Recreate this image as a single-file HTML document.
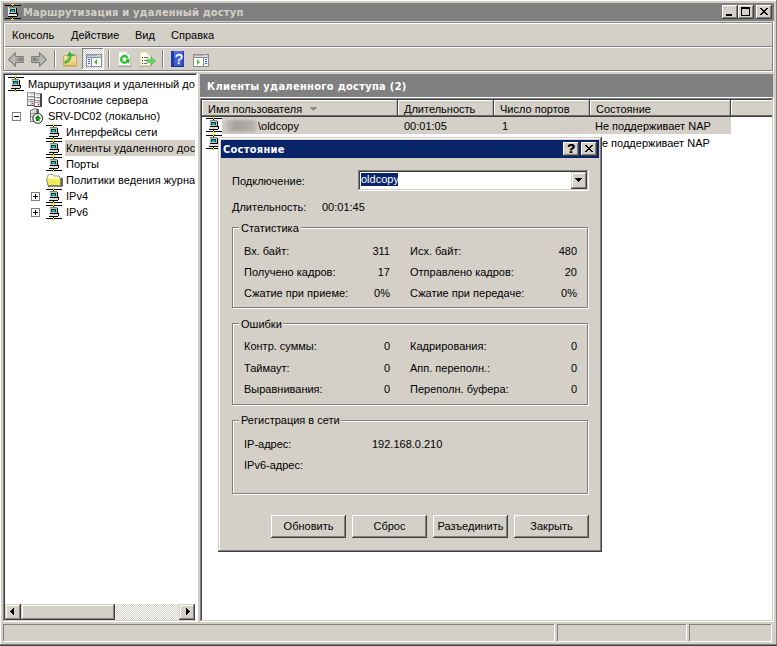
<!DOCTYPE html>
<html lang="ru"><head><meta charset="utf-8"><title>Маршрутизация и удаленный доступ</title>
<style>
html,body{margin:0;padding:0}
body{width:777px;height:646px;overflow:hidden;position:relative;background:#d4d0c8;font-family:"Liberation Sans","DejaVu Sans",sans-serif;font-size:11px;color:#000}
div,span,svg{position:absolute}
span{white-space:nowrap;line-height:13px;height:13px}
.t{font-family:"Liberation Sans","DejaVu Sans",sans-serif;font-size:11px}
.b{font-family:"DejaVu Sans Condensed","DejaVu Sans","Liberation Sans",sans-serif;font-size:11px;font-weight:bold}
.d{font-family:"Liberation Sans","DejaVu Sans",sans-serif;font-size:11px}
.dith{background:repeating-conic-gradient(#fff 0% 25%,#d4d0c8 0% 50%) 0 0/2px 2px}
svg{overflow:visible}
</style></head><body>

<div style="left:0px;top:0px;width:777px;height:1px;background:#ffffff;"></div>
<div style="left:0px;top:0px;width:1px;height:646px;background:#ffffff;"></div>
<div style="left:0px;top:645px;width:777px;height:1px;background:#404040;"></div>
<div style="left:776px;top:0px;width:1px;height:645px;background:#808080;"></div>
<div style="left:0px;top:644px;width:777px;height:1px;background:#808080;"></div>
<div style="left:3px;top:3px;width:771px;height:18px;background:#808080;"></div>
<svg class="i" style="left:5px;top:4px" width="16" height="16" viewBox="0 0 16 16" shape-rendering="crispEdges"><rect x="0" y="1" width="16" height="1" fill="#000"/><rect x="6" y="0" width="3" height="1" fill="#e8e800"/><rect x="7" y="1" width="1" height="1" fill="#ffff00"/><rect x="7" y="2" width="1" height="1" fill="#000"/><rect x="3" y="3" width="8" height="7" fill="#c0c0c0"/><rect x="3" y="3" width="8" height="1" fill="#808080"/><rect x="3" y="3" width="1" height="7" fill="#e8e8e8"/><rect x="11" y="4" width="1" height="6" fill="#000"/><rect x="4" y="9" width="8" height="1" fill="#000"/><rect x="5" y="5" width="5" height="3" fill="#004040"/><rect x="6" y="6" width="3" height="2" fill="#00c0a0"/><rect x="3" y="10" width="9" height="2" fill="#e0e0e0"/><rect x="12" y="9" width="1" height="3" fill="#000"/><rect x="3" y="12" width="9" height="1" fill="#000"/><rect x="0" y="14" width="16" height="1" fill="#000"/><rect x="7" y="13" width="1" height="1" fill="#000"/><rect x="6" y="15" width="3" height="1" fill="#e8e800"/><rect x="7" y="14" width="1" height="1" fill="#ffff00"/></svg>
<span class="b" style="left:23px;top:6px;color:#d4d0c8;letter-spacing:0.17px;">Маршрутизация и удаленный доступ</span>
<div style="left:722px;top:5px;width:16px;height:14px;background:#d4d0c8;"></div>
<div style="left:722px;top:5px;width:15px;height:1px;background:#ffffff;"></div>
<div style="left:722px;top:5px;width:1px;height:13px;background:#ffffff;"></div>
<div style="left:722px;top:18px;width:16px;height:1px;background:#404040;"></div>
<div style="left:737px;top:5px;width:1px;height:14px;background:#404040;"></div>
<div style="left:723px;top:17px;width:14px;height:1px;background:#808080;"></div>
<div style="left:736px;top:6px;width:1px;height:12px;background:#808080;"></div>
<div style="left:726px;top:14px;width:6px;height:2px;background:#000;"></div>
<div style="left:738px;top:5px;width:16px;height:14px;background:#d4d0c8;"></div>
<div style="left:738px;top:5px;width:15px;height:1px;background:#ffffff;"></div>
<div style="left:738px;top:5px;width:1px;height:13px;background:#ffffff;"></div>
<div style="left:738px;top:18px;width:16px;height:1px;background:#404040;"></div>
<div style="left:753px;top:5px;width:1px;height:14px;background:#404040;"></div>
<div style="left:739px;top:17px;width:14px;height:1px;background:#808080;"></div>
<div style="left:752px;top:6px;width:1px;height:12px;background:#808080;"></div>
<div style="left:741px;top:7px;width:9px;height:9px;border:1px solid #000;border-top:2px solid #000;box-sizing:border-box;"></div>
<div style="left:756px;top:5px;width:16px;height:14px;background:#d4d0c8;"></div>
<div style="left:756px;top:5px;width:15px;height:1px;background:#ffffff;"></div>
<div style="left:756px;top:5px;width:1px;height:13px;background:#ffffff;"></div>
<div style="left:756px;top:18px;width:16px;height:1px;background:#404040;"></div>
<div style="left:771px;top:5px;width:1px;height:14px;background:#404040;"></div>
<div style="left:757px;top:17px;width:14px;height:1px;background:#808080;"></div>
<div style="left:770px;top:6px;width:1px;height:12px;background:#808080;"></div>
<svg style="left:760px;top:8px" width="8" height="7" viewBox="0 0 8 7" shape-rendering="crispEdges"><path d="M0 0h2v1h-2zM6 0h2v1h-2zM1 1h2v1h-2zM5 1h2v1h-2zM2 2h4v1h-4zM3 3h2v1h-2zM2 4h4v1h-4zM1 5h2v1h-2zM5 5h2v1h-2zM0 6h2v1h-2zM6 6h2v1h-2z" fill="#000"/></svg>
<div style="left:3px;top:22px;width:771px;height:1px;background:#8c8c8c;"></div>
<div style="left:3px;top:22px;width:1px;height:49px;background:#8c8c8c;"></div>
<div style="left:4px;top:23px;width:769px;height:1px;background:#ffffff;"></div>
<div style="left:4px;top:23px;width:1px;height:47px;background:#ffffff;"></div>
<div style="left:772px;top:23px;width:1px;height:48px;background:#808080;"></div>
<div style="left:773px;top:22px;width:1px;height:50px;background:#ffffff;"></div>
<div style="left:5px;top:46px;width:767px;height:1px;background:#808080;"></div>
<span class="t" style="left:12px;top:29px;">Консоль</span>
<span class="t" style="left:71px;top:29px;">Действие</span>
<span class="t" style="left:135px;top:29px;">Вид</span>
<span class="t" style="left:171px;top:29px;">Справка</span>
<div style="left:5px;top:47px;width:767px;height:1px;background:#ffffff;"></div>
<div style="left:4px;top:70px;width:769px;height:1px;background:#808080;"></div>
<div style="left:3px;top:71px;width:771px;height:1px;background:#ffffff;"></div>
<svg style="left:8px;top:52px" width="16" height="15" viewBox="0 0 16 15"><defs><linearGradient id="gab" x1="0" x2="1" y1="0" y2="0"><stop offset="0" stop-color="#b4b4b4"/><stop offset="1" stop-color="#6e6e6e"/></linearGradient></defs><g><path d="M7.5 0.7 L0.7 7.5 L7.5 14.3 L7.5 10.5 L15.3 10.5 L15.3 4.5 L7.5 4.5 Z" fill="#c2c0bc" stroke="#7c7c7c" stroke-width="1.1" stroke-linejoin="round"/><path d="M6.5 5.6 H14.2 V9.4 H6.5 Z" fill="url(#gab)"/><path d="M2.6 7.5 L6.5 3.6 V11.4 Z" fill="#b8b6b2"/></g></svg>
<svg style="left:31px;top:52px" width="16" height="15" viewBox="0 0 16 15"><defs><linearGradient id="gaf" x1="0" x2="1" y1="0" y2="0"><stop offset="0" stop-color="#b4b4b4"/><stop offset="1" stop-color="#6e6e6e"/></linearGradient></defs><g transform="translate(16,0) scale(-1,1)"><path d="M7.5 0.7 L0.7 7.5 L7.5 14.3 L7.5 10.5 L15.3 10.5 L15.3 4.5 L7.5 4.5 Z" fill="#c2c0bc" stroke="#7c7c7c" stroke-width="1.1" stroke-linejoin="round"/><path d="M6.5 5.6 H14.2 V9.4 H6.5 Z" fill="url(#gaf)"/><path d="M2.6 7.5 L6.5 3.6 V11.4 Z" fill="#b8b6b2"/></g></svg>
<div style="left:54px;top:50px;width:1px;height:18px;background:#808080;"></div>
<div style="left:55px;top:50px;width:1px;height:18px;background:#ffffff;"></div>
<div style="left:108px;top:50px;width:1px;height:18px;background:#808080;"></div>
<div style="left:109px;top:50px;width:1px;height:18px;background:#ffffff;"></div>
<div style="left:162px;top:50px;width:1px;height:18px;background:#808080;"></div>
<div style="left:163px;top:50px;width:1px;height:18px;background:#ffffff;"></div>
<svg style="left:63px;top:51px" width="16" height="16" viewBox="0 0 16 16"><defs><linearGradient id="gf" x1="0" x2="0" y1="0" y2="1"><stop offset="0" stop-color="#f8e4a4"/><stop offset="1" stop-color="#eec870"/></linearGradient></defs><path d="M0.5 4.5 H5.5 L6.5 3.6 H13.5 V15 H0.5 Z" fill="url(#gf)" stroke="#d4aa58" stroke-width="1"/><rect x="0.5" y="14.3" width="13" height="1" fill="#c89c48"/><rect x="9" y="3.8" width="3" height="1.4" fill="#5890e0"/><path d="M2.6 11.2 Q6.6 9.6 7.4 4.8" fill="none" stroke="#34b434" stroke-width="2.6" stroke-linecap="round"/><path d="M3.6 5.2 L6.6 0.6 L10.4 5 L8.6 4.6 L7.2 5.6 Z" fill="#34b434"/><path d="M3 10.6 Q6 9.2 6.8 5" fill="none" stroke="#7ee07e" stroke-width="0.8"/></svg>
<div class="dith" style="left:82px;top:48px;width:22px;height:22px;"></div>
<div style="left:82px;top:48px;width:22px;height:1px;background:#808080;"></div>
<div style="left:82px;top:48px;width:1px;height:22px;background:#808080;"></div>
<div style="left:82px;top:69px;width:22px;height:1px;background:#ffffff;"></div>
<div style="left:103px;top:48px;width:1px;height:22px;background:#ffffff;"></div>
<svg style="left:86px;top:54px" width="16" height="13" viewBox="0 0 16 13" shape-rendering="crispEdges"><rect x="0" y="0" width="16" height="13" fill="#fff"/><rect x="0" y="0" width="16" height="1" fill="#8890a0"/><rect x="0" y="0" width="1" height="13" fill="#8890a0"/><rect x="15" y="0" width="1" height="13" fill="#8890a0"/><rect x="0" y="12" width="16" height="1" fill="#8890a0"/><rect x="1" y="1" width="14" height="1" fill="#a8b0c8"/><rect x="1" y="2" width="14" height="1" fill="#c8d0e0"/><rect x="11" y="1" width="1" height="1" fill="#fff"/><rect x="13" y="1" width="1" height="1" fill="#fff"/><rect x="0" y="3" width="16" height="1" fill="#8890a0"/><rect x="5" y="3" width="1" height="10" fill="#8890a0"/><rect x="1" y="4" width="4" height="8" fill="#eef0f8"/><rect x="2" y="5" width="2" height="1" fill="#3868d8"/><rect x="2" y="7" width="2" height="1" fill="#3868d8"/><rect x="2" y="9" width="2" height="1" fill="#3868d8"/><path d="M11 5 L11 11 L8 8 Z" fill="#48c030" shape-rendering="auto"/></svg>
<svg style="left:118px;top:51px" width="14" height="16" viewBox="0 0 14 16"><path d="M0.6 0.6 H9.6 L12.6 3.6 V15 H0.6 Z" fill="#fff" stroke="#d0d0d0" stroke-width="0.7"/><path d="M0.4 15.2 H12.9" fill="none" stroke="#8c8c8c" stroke-width="1"/><path d="M12.8 4 V15" fill="none" stroke="#b8b8b8" stroke-width="0.8"/><path d="M9.6 0.6 V3.6 H12.6 Z" fill="#e4e4e4" stroke="#bcbcbc" stroke-width="0.6"/><circle cx="6.5" cy="8.4" r="3.3" fill="none" stroke="#2cc42c" stroke-width="2.5"/><path d="M6.5 8.4 L12 6.6 L12 8.4 Z" fill="#fff"/><path d="M7.4 8.6 L11.9 8.2 L10.6 12.8 Z" fill="#22b422"/></svg>
<svg style="left:139px;top:51px" width="18" height="16" viewBox="0 0 18 16"><path d="M1 1 H9 L12 4 V15 H1 Z" fill="#fffce4" stroke="#d0ccb0" stroke-width="0.8"/><path d="M0.8 15.2 H12.3 M12.2 4.5 V15.2" fill="none" stroke="#a4a090" stroke-width="0.9"/><path d="M9 1 V4 H12 Z" fill="#ecead8" stroke="#c8c4b0" stroke-width="0.6"/><rect x="3" y="6" width="1" height="1" fill="#303030"/><rect x="5" y="6" width="4.5" height="1" fill="#6868a8"/><rect x="3" y="9" width="1" height="1" fill="#303030"/><rect x="5" y="9" width="3" height="1" fill="#6868a8"/><rect x="3" y="12" width="1" height="1" fill="#303030"/><rect x="5" y="12" width="3" height="1" fill="#6868a8"/><path d="M8 8.4 H12 V6 L16.6 10 L12 14 V11.6 H8 Z" fill="#5cd45c" stroke="#3cb43c" stroke-width="0.5"/></svg>
<svg style="left:171px;top:51px" width="13" height="16" viewBox="0 0 13 16"><defs><linearGradient id="gh" x1="0" x2="1" y1="0" y2="1"><stop offset="0" stop-color="#5878e4"/><stop offset="1" stop-color="#2c4cc0"/></linearGradient></defs><rect x="0" y="0" width="13" height="16" fill="url(#gh)"/><rect x="0" y="0" width="3" height="16" fill="#1c3cb0"/><rect x="0" y="15" width="13" height="1" fill="#16309a"/><rect x="12" y="0" width="1" height="16" fill="#2440b0"/><text x="7.8" y="13.2" text-anchor="middle" font-family="Liberation Sans,sans-serif" font-size="14" fill="#fff" stroke="#fff" stroke-width="0.3">?</text></svg>
<svg style="left:193px;top:54px" width="16" height="13" viewBox="0 0 16 13" shape-rendering="crispEdges"><rect x="0" y="0" width="16" height="13" fill="#fff"/><rect x="0" y="0" width="16" height="1" fill="#8c8c8c"/><rect x="0" y="0" width="1" height="13" fill="#8c8c8c"/><rect x="15" y="0" width="1" height="13" fill="#8c8c8c"/><rect x="0" y="12" width="16" height="1" fill="#8c8c8c"/><rect x="1" y="1" width="14" height="1" fill="#b4b4b4"/><rect x="1" y="2" width="14" height="1" fill="#d8d8d8"/><rect x="11" y="1" width="1" height="1" fill="#fff"/><rect x="13" y="1" width="1" height="1" fill="#fff"/><rect x="0" y="3" width="16" height="1" fill="#8c8c8c"/><rect x="10" y="3" width="1" height="10" fill="#8c8c8c"/><path d="M4 5 L4 11 L7 8 Z" fill="#50c030" shape-rendering="auto"/><rect x="11" y="4" width="4" height="8" fill="#eef0f8"/><rect x="12" y="5" width="2" height="1" fill="#3868d8"/><rect x="12" y="7" width="2" height="1" fill="#3868d8"/><rect x="12" y="9" width="2" height="1" fill="#3868d8"/></svg>
<div style="left:3px;top:73px;width:195px;height:549px;background:#ffffff;"></div>
<div style="left:3px;top:73px;width:194px;height:1px;background:#808080;"></div>
<div style="left:3px;top:73px;width:1px;height:548px;background:#808080;"></div>
<div style="left:4px;top:74px;width:192px;height:1px;background:#404040;"></div>
<div style="left:4px;top:74px;width:1px;height:546px;background:#404040;"></div>
<div style="left:3px;top:621px;width:195px;height:1px;background:#ffffff;"></div>
<div style="left:197px;top:73px;width:1px;height:549px;background:#ffffff;"></div>
<div style="left:4px;top:620px;width:193px;height:1px;background:#d4d0c8;"></div>
<div style="left:196px;top:74px;width:1px;height:547px;background:#ffffff;"></div>
<div style="left:5px;top:75px;width:190px;height:529px;overflow:hidden">
<div style="left:60px;top:65px;width:140px;height:16px;background:#d4d0c8;"></div>
<svg class="i" style="left:3px;top:1px" width="16" height="16" viewBox="0 0 16 16" shape-rendering="crispEdges"><rect x="0" y="1" width="16" height="1" fill="#000"/><rect x="6" y="0" width="3" height="1" fill="#e8e800"/><rect x="7" y="1" width="1" height="1" fill="#ffff00"/><rect x="7" y="2" width="1" height="1" fill="#000"/><rect x="3" y="3" width="8" height="7" fill="#c0c0c0"/><rect x="3" y="3" width="8" height="1" fill="#808080"/><rect x="3" y="3" width="1" height="7" fill="#e8e8e8"/><rect x="11" y="4" width="1" height="6" fill="#000"/><rect x="4" y="9" width="8" height="1" fill="#000"/><rect x="5" y="5" width="5" height="3" fill="#004040"/><rect x="6" y="6" width="3" height="2" fill="#00c0a0"/><rect x="3" y="10" width="9" height="2" fill="#e0e0e0"/><rect x="12" y="9" width="1" height="3" fill="#000"/><rect x="3" y="12" width="9" height="1" fill="#000"/><rect x="0" y="14" width="16" height="1" fill="#000"/><rect x="7" y="13" width="1" height="1" fill="#000"/><rect x="6" y="15" width="3" height="1" fill="#e8e800"/><rect x="7" y="14" width="1" height="1" fill="#ffff00"/></svg>
<span class="t" style="left:23px;top:3px;">Маршрутизация и удаленный доступ</span>
<svg style="left:22px;top:17px" width="16" height="16" viewBox="0 0 16 16" shape-rendering="crispEdges"><rect x="0" y="0" width="8" height="14" fill="#d4d4d4"/><rect x="1" y="1" width="2" height="12" fill="#f4f4f4"/><rect x="0" y="0" width="8" height="1" fill="#a0a0a0"/><rect x="0" y="0" width="1" height="14" fill="#909090"/><rect x="0" y="13" width="8" height="1" fill="#505050"/><rect x="7" y="0" width="1" height="14" fill="#606060"/><rect x="1" y="3" width="6" height="1" fill="#fff"/><rect x="1" y="4" width="6" height="1" fill="#909090"/><rect x="1" y="6" width="6" height="1" fill="#fff"/><rect x="1" y="7" width="6" height="1" fill="#909090"/><rect x="1" y="9" width="6" height="1" fill="#a8a8a8"/><rect x="5" y="11" width="1" height="1" fill="#e80000"/><rect x="7" y="1" width="7" height="14" fill="#dcdcdc"/><rect x="8" y="2" width="2" height="12" fill="#f8f8f8"/><rect x="7" y="1" width="7" height="1" fill="#a0a0a0"/><rect x="7" y="1" width="1" height="14" fill="#808080"/><rect x="7" y="14" width="8" height="1" fill="#404040"/><rect x="13" y="2" width="2" height="13" fill="#484848"/><rect x="14" y="1" width="1" height="1" fill="#707070"/><rect x="8" y="4" width="5" height="1" fill="#fff"/><rect x="8" y="5" width="5" height="1" fill="#909090"/><rect x="8" y="7" width="5" height="1" fill="#fff"/><rect x="8" y="8" width="5" height="1" fill="#909090"/><rect x="8" y="10" width="5" height="1" fill="#a8a8a8"/><rect x="11" y="12" width="1" height="1" fill="#e80000"/></svg>
<span class="t" style="left:43px;top:19px;">Состояние сервера</span>
<svg style="left:7px;top:37px" width="9" height="9" viewBox="0 0 9 9" shape-rendering="crispEdges"><rect x="0" y="0" width="9" height="9" fill="#fff"/><path d="M0 0h9v1h-9zM0 8h9v1h-9zM0 0h1v9h-1zM8 0h1v9h-1z" fill="#808080"/><rect x="2" y="4" width="5" height="1" fill="#000"/></svg>
<svg style="left:25px;top:33px" width="16" height="16" viewBox="0 0 16 16"><path d="M0.5 2.5 L5.5 0.5 L8.5 1.5 V13.5 H0.5 Z" fill="#d8d8d8" stroke="#707070"/><path d="M6.5 1 L8.5 1.8 V6 H6.5 Z" fill="#505050"/><path d="M1.5 3 V13" stroke="#f8f8f8"/><path d="M1 5.5 H6 M1 8.5 H4" stroke="#909090"/><circle cx="7.8" cy="10.4" r="4.9" fill="#fff" stroke="#202020" stroke-width="1"/><path d="M7.8 6.9 L11.2 10.4 H9.6 V13 H6 V10.4 H4.4 Z" fill="#108c10"/></svg>
<span class="t" style="left:43px;top:35px;">SRV-DC02 (локально)</span>
<svg class="i" style="left:41px;top:49px" width="16" height="16" viewBox="0 0 16 16" shape-rendering="crispEdges"><rect x="0" y="1" width="16" height="1" fill="#000"/><rect x="6" y="0" width="3" height="1" fill="#e8e800"/><rect x="7" y="1" width="1" height="1" fill="#ffff00"/><rect x="7" y="2" width="1" height="1" fill="#000"/><rect x="3" y="3" width="8" height="7" fill="#c0c0c0"/><rect x="3" y="3" width="8" height="1" fill="#808080"/><rect x="3" y="3" width="1" height="7" fill="#e8e8e8"/><rect x="11" y="4" width="1" height="6" fill="#000"/><rect x="4" y="9" width="8" height="1" fill="#000"/><rect x="5" y="5" width="5" height="3" fill="#004040"/><rect x="6" y="6" width="3" height="2" fill="#00c0a0"/><rect x="3" y="10" width="9" height="2" fill="#e0e0e0"/><rect x="12" y="9" width="1" height="3" fill="#000"/><rect x="3" y="12" width="9" height="1" fill="#000"/><rect x="0" y="14" width="16" height="1" fill="#000"/><rect x="7" y="13" width="1" height="1" fill="#000"/><rect x="6" y="15" width="3" height="1" fill="#e8e800"/><rect x="7" y="14" width="1" height="1" fill="#ffff00"/></svg>
<span class="t" style="left:61px;top:51px;">Интерфейсы сети</span>
<svg class="i" style="left:41px;top:65px" width="16" height="16" viewBox="0 0 16 16" shape-rendering="crispEdges"><rect x="0" y="1" width="16" height="1" fill="#000"/><rect x="6" y="0" width="3" height="1" fill="#e8e800"/><rect x="7" y="1" width="1" height="1" fill="#ffff00"/><rect x="7" y="2" width="1" height="1" fill="#000"/><rect x="3" y="3" width="8" height="7" fill="#c0c0c0"/><rect x="3" y="3" width="8" height="1" fill="#808080"/><rect x="3" y="3" width="1" height="7" fill="#e8e8e8"/><rect x="11" y="4" width="1" height="6" fill="#000"/><rect x="4" y="9" width="8" height="1" fill="#000"/><rect x="5" y="5" width="5" height="3" fill="#004040"/><rect x="6" y="6" width="3" height="2" fill="#00c0a0"/><rect x="3" y="10" width="9" height="2" fill="#e0e0e0"/><rect x="12" y="9" width="1" height="3" fill="#000"/><rect x="3" y="12" width="9" height="1" fill="#000"/><rect x="0" y="14" width="16" height="1" fill="#000"/><rect x="7" y="13" width="1" height="1" fill="#000"/><rect x="6" y="15" width="3" height="1" fill="#e8e800"/><rect x="7" y="14" width="1" height="1" fill="#ffff00"/></svg>
<span class="t" style="left:61px;top:67px;letter-spacing:0.12px;">Клиенты удаленного доступа</span>
<svg class="i" style="left:41px;top:81px" width="16" height="16" viewBox="0 0 16 16" shape-rendering="crispEdges"><rect x="0" y="1" width="16" height="1" fill="#000"/><rect x="6" y="0" width="3" height="1" fill="#e8e800"/><rect x="7" y="1" width="1" height="1" fill="#ffff00"/><rect x="7" y="2" width="1" height="1" fill="#000"/><rect x="3" y="3" width="8" height="7" fill="#c0c0c0"/><rect x="3" y="3" width="8" height="1" fill="#808080"/><rect x="3" y="3" width="1" height="7" fill="#e8e8e8"/><rect x="11" y="4" width="1" height="6" fill="#000"/><rect x="4" y="9" width="8" height="1" fill="#000"/><rect x="5" y="5" width="5" height="3" fill="#004040"/><rect x="6" y="6" width="3" height="2" fill="#00c0a0"/><rect x="3" y="10" width="9" height="2" fill="#e0e0e0"/><rect x="12" y="9" width="1" height="3" fill="#000"/><rect x="3" y="12" width="9" height="1" fill="#000"/><rect x="0" y="14" width="16" height="1" fill="#000"/><rect x="7" y="13" width="1" height="1" fill="#000"/><rect x="6" y="15" width="3" height="1" fill="#e8e800"/><rect x="7" y="14" width="1" height="1" fill="#ffff00"/></svg>
<span class="t" style="left:61px;top:83px;">Порты</span>
<svg style="left:41px;top:97px" width="17" height="16" viewBox="0 0 17 16"><path d="M1.5 4.5 Q1.5 2.5 3.5 2.5 H7 L8.5 4 H13.5 V6.5 H1.5 Z" fill="#fbfbe0" stroke="#9c9c84" stroke-width="1"/><path d="M0.8 6.2 Q0.2 6.4 0.6 7.4 L2 13.5 H15.5 V6.2 Z" fill="#f0ec58"/><path d="M0.8 6.2 Q0.2 6.4 0.6 7.4 L2 13.5" fill="none" stroke="#8c8c70" stroke-width="1"/><path d="M2 6.5 H14" stroke="#fcfcc0" stroke-width="1"/><path d="M2 14 H16 V5.5" fill="none" stroke="#101010" stroke-width="1.2"/><path d="M14.5 6 V13" stroke="#808060" stroke-width="1"/></svg>
<span class="t" style="left:61px;top:99px;letter-spacing:0.05px;">Политики ведения журнала</span>
<svg style="left:26px;top:117px" width="9" height="9" viewBox="0 0 9 9" shape-rendering="crispEdges"><rect x="0" y="0" width="9" height="9" fill="#fff"/><path d="M0 0h9v1h-9zM0 8h9v1h-9zM0 0h1v9h-1zM8 0h1v9h-1z" fill="#808080"/><rect x="2" y="4" width="5" height="1" fill="#000"/><rect x="4" y="2" width="1" height="5" fill="#000"/></svg>
<svg class="i" style="left:41px;top:113px" width="16" height="16" viewBox="0 0 16 16" shape-rendering="crispEdges"><rect x="0" y="1" width="16" height="1" fill="#000"/><rect x="6" y="0" width="3" height="1" fill="#e8e800"/><rect x="7" y="1" width="1" height="1" fill="#ffff00"/><rect x="7" y="2" width="1" height="1" fill="#000"/><rect x="3" y="3" width="8" height="7" fill="#c0c0c0"/><rect x="3" y="3" width="8" height="1" fill="#808080"/><rect x="3" y="3" width="1" height="7" fill="#e8e8e8"/><rect x="11" y="4" width="1" height="6" fill="#000"/><rect x="4" y="9" width="8" height="1" fill="#000"/><rect x="5" y="5" width="5" height="3" fill="#004040"/><rect x="6" y="6" width="3" height="2" fill="#00c0a0"/><rect x="3" y="10" width="9" height="2" fill="#e0e0e0"/><rect x="12" y="9" width="1" height="3" fill="#000"/><rect x="3" y="12" width="9" height="1" fill="#000"/><rect x="0" y="14" width="16" height="1" fill="#000"/><rect x="7" y="13" width="1" height="1" fill="#000"/><rect x="6" y="15" width="3" height="1" fill="#e8e800"/><rect x="7" y="14" width="1" height="1" fill="#ffff00"/></svg>
<span class="t" style="left:61px;top:115px;">IPv4</span>
<svg style="left:26px;top:133px" width="9" height="9" viewBox="0 0 9 9" shape-rendering="crispEdges"><rect x="0" y="0" width="9" height="9" fill="#fff"/><path d="M0 0h9v1h-9zM0 8h9v1h-9zM0 0h1v9h-1zM8 0h1v9h-1z" fill="#808080"/><rect x="2" y="4" width="5" height="1" fill="#000"/><rect x="4" y="2" width="1" height="5" fill="#000"/></svg>
<svg class="i" style="left:41px;top:129px" width="16" height="16" viewBox="0 0 16 16" shape-rendering="crispEdges"><rect x="0" y="1" width="16" height="1" fill="#000"/><rect x="6" y="0" width="3" height="1" fill="#e8e800"/><rect x="7" y="1" width="1" height="1" fill="#ffff00"/><rect x="7" y="2" width="1" height="1" fill="#000"/><rect x="3" y="3" width="8" height="7" fill="#c0c0c0"/><rect x="3" y="3" width="8" height="1" fill="#808080"/><rect x="3" y="3" width="1" height="7" fill="#e8e8e8"/><rect x="11" y="4" width="1" height="6" fill="#000"/><rect x="4" y="9" width="8" height="1" fill="#000"/><rect x="5" y="5" width="5" height="3" fill="#004040"/><rect x="6" y="6" width="3" height="2" fill="#00c0a0"/><rect x="3" y="10" width="9" height="2" fill="#e0e0e0"/><rect x="12" y="9" width="1" height="3" fill="#000"/><rect x="3" y="12" width="9" height="1" fill="#000"/><rect x="0" y="14" width="16" height="1" fill="#000"/><rect x="7" y="13" width="1" height="1" fill="#000"/><rect x="6" y="15" width="3" height="1" fill="#e8e800"/><rect x="7" y="14" width="1" height="1" fill="#ffff00"/></svg>
<span class="t" style="left:61px;top:131px;">IPv6</span>
</div>
<div class="dith" style="left:5px;top:604px;width:190px;height:16px;"></div>
<div style="left:5px;top:604px;width:16px;height:16px;background:#d4d0c8;"></div>
<div style="left:6px;top:605px;width:13px;height:1px;background:#ffffff;"></div>
<div style="left:6px;top:605px;width:1px;height:13px;background:#ffffff;"></div>
<div style="left:5px;top:619px;width:16px;height:1px;background:#404040;"></div>
<div style="left:20px;top:604px;width:1px;height:16px;background:#404040;"></div>
<div style="left:6px;top:618px;width:14px;height:1px;background:#808080;"></div>
<div style="left:19px;top:605px;width:1px;height:14px;background:#808080;"></div>
<div style="left:179px;top:604px;width:16px;height:16px;background:#d4d0c8;"></div>
<div style="left:180px;top:605px;width:13px;height:1px;background:#ffffff;"></div>
<div style="left:180px;top:605px;width:1px;height:13px;background:#ffffff;"></div>
<div style="left:179px;top:619px;width:16px;height:1px;background:#404040;"></div>
<div style="left:194px;top:604px;width:1px;height:16px;background:#404040;"></div>
<div style="left:180px;top:618px;width:14px;height:1px;background:#808080;"></div>
<div style="left:193px;top:605px;width:1px;height:14px;background:#808080;"></div>
<div style="left:21px;top:604px;width:94px;height:16px;background:#d4d0c8;"></div>
<div style="left:22px;top:605px;width:91px;height:1px;background:#ffffff;"></div>
<div style="left:22px;top:605px;width:1px;height:13px;background:#ffffff;"></div>
<div style="left:21px;top:619px;width:94px;height:1px;background:#404040;"></div>
<div style="left:114px;top:604px;width:1px;height:16px;background:#404040;"></div>
<div style="left:22px;top:618px;width:92px;height:1px;background:#808080;"></div>
<div style="left:113px;top:605px;width:1px;height:14px;background:#808080;"></div>
<svg style="left:10px;top:608px" width="4" height="7" viewBox="0 0 4 7" shape-rendering="crispEdges"><path d="M3 0h1v7h-1zM2 1h1v5h-1zM1 2h1v3h-1zM0 3h1v1h-1z" fill="#000"/></svg>
<svg style="left:186px;top:608px" width="4" height="7" viewBox="0 0 4 7" shape-rendering="crispEdges"><path d="M0 0h1v7h-1zM1 1h1v5h-1zM2 2h1v3h-1zM3 3h1v1h-1z" fill="#000"/></svg>
<div style="left:200px;top:74px;width:573px;height:23px;background:#808080;"></div>
<div style="left:200px;top:97px;width:573px;height:1px;background:#ffffff;"></div>
<span class="b" style="left:207px;top:80px;color:#fff;letter-spacing:0.3px;">Клиенты удаленного доступа (2)</span>
<div style="left:200px;top:98px;width:574px;height:524px;background:#ffffff;"></div>
<div style="left:200px;top:98px;width:573px;height:1px;background:#808080;"></div>
<div style="left:200px;top:98px;width:1px;height:523px;background:#808080;"></div>
<div style="left:201px;top:99px;width:571px;height:1px;background:#404040;"></div>
<div style="left:201px;top:99px;width:1px;height:521px;background:#404040;"></div>
<div style="left:201px;top:620px;width:572px;height:1px;background:#d4d0c8;"></div>
<div style="left:772px;top:99px;width:1px;height:522px;background:#d4d0c8;"></div>
<div style="left:202px;top:100px;width:196px;height:17px;background:#d4d0c8;"></div>
<div style="left:202px;top:100px;width:195px;height:1px;background:#ffffff;"></div>
<div style="left:202px;top:100px;width:1px;height:15px;background:#ffffff;"></div>
<div style="left:202px;top:115px;width:196px;height:1px;background:#686868;"></div>
<div style="left:202px;top:116px;width:196px;height:1px;background:#404040;"></div>
<div style="left:397px;top:100px;width:1px;height:17px;background:#404040;"></div>
<div style="left:396px;top:101px;width:1px;height:14px;background:#b4b2ac;"></div>
<span class="t" style="left:208px;top:103px;">Имя пользователя</span>
<div style="left:398px;top:100px;width:96px;height:17px;background:#d4d0c8;"></div>
<div style="left:398px;top:100px;width:95px;height:1px;background:#ffffff;"></div>
<div style="left:398px;top:100px;width:1px;height:15px;background:#ffffff;"></div>
<div style="left:398px;top:115px;width:96px;height:1px;background:#686868;"></div>
<div style="left:398px;top:116px;width:96px;height:1px;background:#404040;"></div>
<div style="left:493px;top:100px;width:1px;height:17px;background:#404040;"></div>
<div style="left:492px;top:101px;width:1px;height:14px;background:#b4b2ac;"></div>
<span class="t" style="left:404px;top:103px;">Длительность</span>
<div style="left:494px;top:100px;width:96px;height:17px;background:#d4d0c8;"></div>
<div style="left:494px;top:100px;width:95px;height:1px;background:#ffffff;"></div>
<div style="left:494px;top:100px;width:1px;height:15px;background:#ffffff;"></div>
<div style="left:494px;top:115px;width:96px;height:1px;background:#686868;"></div>
<div style="left:494px;top:116px;width:96px;height:1px;background:#404040;"></div>
<div style="left:589px;top:100px;width:1px;height:17px;background:#404040;"></div>
<div style="left:588px;top:101px;width:1px;height:14px;background:#b4b2ac;"></div>
<span class="t" style="left:500px;top:103px;">Число портов</span>
<div style="left:590px;top:100px;width:141px;height:17px;background:#d4d0c8;"></div>
<div style="left:590px;top:100px;width:140px;height:1px;background:#ffffff;"></div>
<div style="left:590px;top:100px;width:1px;height:15px;background:#ffffff;"></div>
<div style="left:590px;top:115px;width:141px;height:1px;background:#686868;"></div>
<div style="left:590px;top:116px;width:141px;height:1px;background:#404040;"></div>
<div style="left:730px;top:100px;width:1px;height:17px;background:#404040;"></div>
<div style="left:729px;top:101px;width:1px;height:14px;background:#b4b2ac;"></div>
<span class="t" style="left:596px;top:103px;">Состояние</span>
<div style="left:731px;top:100px;width:41px;height:17px;background:#d4d0c8;"></div>
<div style="left:731px;top:100px;width:41px;height:1px;background:#ffffff;"></div>
<div style="left:731px;top:100px;width:1px;height:15px;background:#ffffff;"></div>
<div style="left:731px;top:116px;width:41px;height:1px;background:#404040;"></div>
<div style="left:731px;top:115px;width:41px;height:1px;background:#686868;"></div>
<svg style="left:310px;top:107px" width="7" height="4" viewBox="0 0 7 4" shape-rendering="crispEdges"><path d="M0 0h7v1h-7zM1 1h5v1h-5zM2 2h3v1h-3zM3 3h1v1h-1z" fill="#8c8c8c"/></svg>
<div style="left:222px;top:117px;width:509px;height:17px;background:#d4d0c8;"></div>
<svg class="i" style="left:206px;top:117px" width="16" height="16" viewBox="0 0 16 16" shape-rendering="crispEdges"><rect x="0" y="1" width="16" height="1" fill="#000"/><rect x="6" y="0" width="3" height="1" fill="#e8e800"/><rect x="7" y="1" width="1" height="1" fill="#ffff00"/><rect x="7" y="2" width="1" height="1" fill="#000"/><rect x="3" y="3" width="8" height="7" fill="#c0c0c0"/><rect x="3" y="3" width="8" height="1" fill="#808080"/><rect x="3" y="3" width="1" height="7" fill="#e8e8e8"/><rect x="11" y="4" width="1" height="6" fill="#000"/><rect x="4" y="9" width="8" height="1" fill="#000"/><rect x="5" y="5" width="5" height="3" fill="#004040"/><rect x="6" y="6" width="3" height="2" fill="#00c0a0"/><rect x="3" y="10" width="9" height="2" fill="#e0e0e0"/><rect x="12" y="9" width="1" height="3" fill="#000"/><rect x="3" y="12" width="9" height="1" fill="#000"/><rect x="0" y="14" width="16" height="1" fill="#000"/><rect x="7" y="13" width="1" height="1" fill="#000"/><rect x="6" y="15" width="3" height="1" fill="#e8e800"/><rect x="7" y="14" width="1" height="1" fill="#ffff00"/></svg>
<svg class="i" style="left:206px;top:134px" width="16" height="16" viewBox="0 0 16 16" shape-rendering="crispEdges"><rect x="0" y="1" width="16" height="1" fill="#000"/><rect x="6" y="0" width="3" height="1" fill="#e8e800"/><rect x="7" y="1" width="1" height="1" fill="#ffff00"/><rect x="7" y="2" width="1" height="1" fill="#000"/><rect x="3" y="3" width="8" height="7" fill="#c0c0c0"/><rect x="3" y="3" width="8" height="1" fill="#808080"/><rect x="3" y="3" width="1" height="7" fill="#e8e8e8"/><rect x="11" y="4" width="1" height="6" fill="#000"/><rect x="4" y="9" width="8" height="1" fill="#000"/><rect x="5" y="5" width="5" height="3" fill="#004040"/><rect x="6" y="6" width="3" height="2" fill="#00c0a0"/><rect x="3" y="10" width="9" height="2" fill="#e0e0e0"/><rect x="12" y="9" width="1" height="3" fill="#000"/><rect x="3" y="12" width="9" height="1" fill="#000"/><rect x="0" y="14" width="16" height="1" fill="#000"/><rect x="7" y="13" width="1" height="1" fill="#000"/><rect x="6" y="15" width="3" height="1" fill="#e8e800"/><rect x="7" y="14" width="1" height="1" fill="#ffff00"/></svg>
<div style="left:225px;top:120px;width:31px;height:12px;background:linear-gradient(90deg,#c4c2bc,#a6a4a0 30%,#a8a6a2 60%,#b8b6b0);filter:blur(1.6px);"></div>
<span class="t" style="left:258px;top:120px;">\oldcopy</span>
<span class="t" style="left:404px;top:120px;">00:01:05</span>
<span class="t" style="left:502px;top:120px;">1</span>
<span class="t" style="left:595px;top:120px;">Не поддерживает NAP</span>
<span class="t" style="left:594px;top:137px;">Не поддерживает NAP</span>
<div style="left:3px;top:624px;width:551px;height:1px;background:#808080;"></div>
<div style="left:3px;top:624px;width:1px;height:17px;background:#808080;"></div>
<div style="left:3px;top:641px;width:552px;height:1px;background:#ffffff;"></div>
<div style="left:554px;top:624px;width:1px;height:18px;background:#ffffff;"></div>
<div style="left:557px;top:624px;width:129px;height:1px;background:#808080;"></div>
<div style="left:557px;top:624px;width:1px;height:17px;background:#808080;"></div>
<div style="left:557px;top:641px;width:130px;height:1px;background:#ffffff;"></div>
<div style="left:686px;top:624px;width:1px;height:18px;background:#ffffff;"></div>
<div style="left:689px;top:624px;width:82px;height:1px;background:#808080;"></div>
<div style="left:689px;top:624px;width:1px;height:17px;background:#808080;"></div>
<div style="left:689px;top:641px;width:83px;height:1px;background:#ffffff;"></div>
<div style="left:771px;top:624px;width:1px;height:18px;background:#ffffff;"></div>
<div style="left:218px;top:137px;width:384px;height:415px;background:#d4d0c8;"></div>
<div style="left:218px;top:137px;width:383px;height:1px;background:#d4d0c8;"></div>
<div style="left:218px;top:137px;width:1px;height:414px;background:#d4d0c8;"></div>
<div style="left:219px;top:138px;width:381px;height:1px;background:#ffffff;"></div>
<div style="left:219px;top:138px;width:1px;height:412px;background:#ffffff;"></div>
<div style="left:218px;top:551px;width:384px;height:1px;background:#404040;"></div>
<div style="left:601px;top:137px;width:1px;height:415px;background:#404040;"></div>
<div style="left:219px;top:550px;width:382px;height:1px;background:#808080;"></div>
<div style="left:600px;top:138px;width:1px;height:413px;background:#808080;"></div>
<div style="left:221px;top:140px;width:378px;height:18px;background:#0a246a;"></div>
<span class="b" style="left:223px;top:143px;color:#fff;letter-spacing:0.28px;">Состояние</span>
<div style="left:563px;top:142px;width:16px;height:14px;background:#d4d0c8;"></div>
<div style="left:563px;top:142px;width:15px;height:1px;background:#ffffff;"></div>
<div style="left:563px;top:142px;width:1px;height:13px;background:#ffffff;"></div>
<div style="left:563px;top:155px;width:16px;height:1px;background:#404040;"></div>
<div style="left:578px;top:142px;width:1px;height:14px;background:#404040;"></div>
<div style="left:564px;top:154px;width:14px;height:1px;background:#808080;"></div>
<div style="left:577px;top:143px;width:1px;height:12px;background:#808080;"></div>
<span class="b" style="left:567px;top:142px;font-family:'Liberation Sans',sans-serif;font-size:13px;text-shadow:0.5px 0 0 #000">?</span>
<div style="left:581px;top:142px;width:16px;height:14px;background:#d4d0c8;"></div>
<div style="left:581px;top:142px;width:15px;height:1px;background:#ffffff;"></div>
<div style="left:581px;top:142px;width:1px;height:13px;background:#ffffff;"></div>
<div style="left:581px;top:155px;width:16px;height:1px;background:#404040;"></div>
<div style="left:596px;top:142px;width:1px;height:14px;background:#404040;"></div>
<div style="left:582px;top:154px;width:14px;height:1px;background:#808080;"></div>
<div style="left:595px;top:143px;width:1px;height:12px;background:#808080;"></div>
<svg style="left:585px;top:145px" width="8" height="7" viewBox="0 0 8 7" shape-rendering="crispEdges"><path d="M0 0h2v1h-2zM6 0h2v1h-2zM1 1h2v1h-2zM5 1h2v1h-2zM2 2h4v1h-4zM3 3h2v1h-2zM2 4h4v1h-4zM1 5h2v1h-2zM5 5h2v1h-2zM0 6h2v1h-2zM6 6h2v1h-2z" fill="#000"/></svg>
<span class="d" style="left:232px;top:175px;">Подключение:</span>
<div style="left:358px;top:170px;width:231px;height:21px;background:#ffffff;"></div>
<div style="left:358px;top:170px;width:230px;height:1px;background:#808080;"></div>
<div style="left:358px;top:170px;width:1px;height:20px;background:#808080;"></div>
<div style="left:359px;top:171px;width:228px;height:1px;background:#404040;"></div>
<div style="left:359px;top:171px;width:1px;height:18px;background:#404040;"></div>
<div style="left:358px;top:190px;width:231px;height:1px;background:#ffffff;"></div>
<div style="left:588px;top:170px;width:1px;height:21px;background:#ffffff;"></div>
<div style="left:359px;top:189px;width:229px;height:1px;background:#d4d0c8;"></div>
<div style="left:587px;top:171px;width:1px;height:19px;background:#d4d0c8;"></div>
<div style="left:571px;top:172px;width:16px;height:17px;background:#d4d0c8;"></div>
<div style="left:572px;top:173px;width:13px;height:1px;background:#ffffff;"></div>
<div style="left:572px;top:173px;width:1px;height:14px;background:#ffffff;"></div>
<div style="left:571px;top:188px;width:16px;height:1px;background:#404040;"></div>
<div style="left:586px;top:172px;width:1px;height:17px;background:#404040;"></div>
<div style="left:572px;top:187px;width:14px;height:1px;background:#808080;"></div>
<div style="left:585px;top:173px;width:1px;height:15px;background:#808080;"></div>
<svg style="left:575px;top:178px" width="7" height="4" viewBox="0 0 7 4" shape-rendering="crispEdges"><path d="M0 0h7v1h-7zM1 1h5v1h-5zM2 2h3v1h-3zM3 3h1v1h-1z" fill="#000"/></svg>
<div style="left:361px;top:173px;width:37px;height:13px;background:#0a246a;"></div>
<span class="d" style="left:361px;top:173px;color:#fff;">oldcopy</span>
<span class="d" style="left:232px;top:201px;">Длительность:</span>
<span class="d" style="left:322px;top:201px;">00:01:45</span>
<div style="left:233px;top:228px;width:356px;height:81px;border:1px solid #fff;box-sizing:border-box;"></div>
<div style="left:232px;top:227px;width:356px;height:81px;border:1px solid #808080;box-sizing:border-box;"></div>
<div style="left:239px;top:227px;width:62px;height:2px;background:#d4d0c8;"></div>
<span class="d" style="left:241px;top:222px;">Статистика</span>
<div style="left:233px;top:324px;width:356px;height:82px;border:1px solid #fff;box-sizing:border-box;"></div>
<div style="left:232px;top:323px;width:356px;height:82px;border:1px solid #808080;box-sizing:border-box;"></div>
<div style="left:239px;top:323px;width:44px;height:2px;background:#d4d0c8;"></div>
<span class="d" style="left:241px;top:318px;">Ошибки</span>
<div style="left:233px;top:421px;width:356px;height:74px;border:1px solid #fff;box-sizing:border-box;"></div>
<div style="left:232px;top:420px;width:356px;height:74px;border:1px solid #808080;box-sizing:border-box;"></div>
<div style="left:239px;top:420px;width:102px;height:2px;background:#d4d0c8;"></div>
<span class="d" style="left:241px;top:414px;">Регистрация в сети</span>
<span class="d" style="left:244px;top:245px;">Вх. байт:</span>
<span class="d" style="right:387px;top:245px;">311</span>
<span class="d" style="left:410px;top:245px;">Исх. байт:</span>
<span class="d" style="right:200px;top:245px;">480</span>
<span class="d" style="left:244px;top:266px;">Получено кадров:</span>
<span class="d" style="right:387px;top:266px;">17</span>
<span class="d" style="left:410px;top:266px;">Отправлено кадров:</span>
<span class="d" style="right:200px;top:266px;">20</span>
<span class="d" style="left:244px;top:287px;">Сжатие при приеме:</span>
<span class="d" style="right:387px;top:287px;">0%</span>
<span class="d" style="left:410px;top:287px;">Сжатие при передаче:</span>
<span class="d" style="right:200px;top:287px;">0%</span>
<span class="d" style="left:244px;top:340px;">Контр. суммы:</span>
<span class="d" style="right:387px;top:340px;">0</span>
<span class="d" style="left:410px;top:340px;">Кадрирования:</span>
<span class="d" style="right:200px;top:340px;">0</span>
<span class="d" style="left:244px;top:362px;">Таймаут:</span>
<span class="d" style="right:387px;top:362px;">0</span>
<span class="d" style="left:410px;top:362px;">Апп. переполн.:</span>
<span class="d" style="right:200px;top:362px;">0</span>
<span class="d" style="left:244px;top:383px;">Выравнивания:</span>
<span class="d" style="right:387px;top:383px;">0</span>
<span class="d" style="left:410px;top:383px;">Переполн. буфера:</span>
<span class="d" style="right:200px;top:383px;">0</span>
<span class="d" style="left:244px;top:438px;">IP-адрес:</span>
<span class="d" style="left:372px;top:438px;">192.168.0.210</span>
<span class="d" style="left:244px;top:459px;">IPv6-адрес:</span>
<div style="left:271px;top:515px;width:75px;height:23px;background:#d4d0c8;"></div>
<div style="left:271px;top:515px;width:74px;height:1px;background:#ffffff;"></div>
<div style="left:271px;top:515px;width:1px;height:22px;background:#ffffff;"></div>
<div style="left:271px;top:537px;width:75px;height:1px;background:#404040;"></div>
<div style="left:345px;top:515px;width:1px;height:23px;background:#404040;"></div>
<div style="left:272px;top:536px;width:73px;height:1px;background:#808080;"></div>
<div style="left:344px;top:516px;width:1px;height:21px;background:#808080;"></div>
<span class="d" style="left:271px;top:520px;width:75px;text-align:center">Обновить</span>
<div style="left:352px;top:515px;width:75px;height:23px;background:#d4d0c8;"></div>
<div style="left:352px;top:515px;width:74px;height:1px;background:#ffffff;"></div>
<div style="left:352px;top:515px;width:1px;height:22px;background:#ffffff;"></div>
<div style="left:352px;top:537px;width:75px;height:1px;background:#404040;"></div>
<div style="left:426px;top:515px;width:1px;height:23px;background:#404040;"></div>
<div style="left:353px;top:536px;width:73px;height:1px;background:#808080;"></div>
<div style="left:425px;top:516px;width:1px;height:21px;background:#808080;"></div>
<span class="d" style="left:352px;top:520px;width:75px;text-align:center">Сброс</span>
<div style="left:433px;top:515px;width:75px;height:23px;background:#d4d0c8;"></div>
<div style="left:433px;top:515px;width:74px;height:1px;background:#ffffff;"></div>
<div style="left:433px;top:515px;width:1px;height:22px;background:#ffffff;"></div>
<div style="left:433px;top:537px;width:75px;height:1px;background:#404040;"></div>
<div style="left:507px;top:515px;width:1px;height:23px;background:#404040;"></div>
<div style="left:434px;top:536px;width:73px;height:1px;background:#808080;"></div>
<div style="left:506px;top:516px;width:1px;height:21px;background:#808080;"></div>
<span class="d" style="left:433px;top:520px;width:75px;text-align:center">Разъединить</span>
<div style="left:514px;top:515px;width:75px;height:23px;background:#d4d0c8;"></div>
<div style="left:514px;top:515px;width:74px;height:1px;background:#ffffff;"></div>
<div style="left:514px;top:515px;width:1px;height:22px;background:#ffffff;"></div>
<div style="left:514px;top:537px;width:75px;height:1px;background:#404040;"></div>
<div style="left:588px;top:515px;width:1px;height:23px;background:#404040;"></div>
<div style="left:515px;top:536px;width:73px;height:1px;background:#808080;"></div>
<div style="left:587px;top:516px;width:1px;height:21px;background:#808080;"></div>
<span class="d" style="left:514px;top:520px;width:75px;text-align:center">Закрыть</span>
</body></html>
